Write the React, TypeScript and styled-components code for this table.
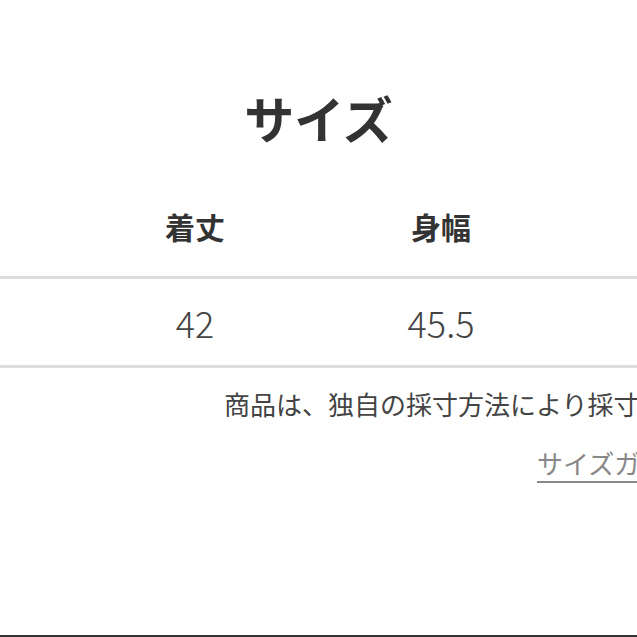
import styled, { createGlobalStyle } from 'styled-components'

const GlobalStyle = createGlobalStyle`
  html, body {
    margin: 0;
    padding: 0;
    background: #fff;
    overflow: hidden;
  }
  body {
    font-family: "Noto Sans CJK JP", "Noto Sans", sans-serif;
    color: #333;
  }
`

const columns = [
  { label: '着丈', value: '42' },
  { label: '身幅', value: '45.5' },
]

const App: React.FC = () => {
  return (
    <Page>
      <GlobalStyle />
      <Title>サイズ</Title>
      <SizeTable>
        <HeadRow>
          {columns.map((c) => (
            <HeadCell key={c.label}>{c.label}</HeadCell>
          ))}
        </HeadRow>
        <BodyRow>
          {columns.map((c) => (
            <BodyCell key={c.label}>{c.value}</BodyCell>
          ))}
        </BodyRow>
      </SizeTable>
      <Note>商品は、独自の採寸方法により採寸しております。</Note>
      <GuideLink href="#">サイズガイド</GuideLink>
    </Page>
  )
}

export default App

const Page = styled.div`
  width: 637px;
  height: 637px;
  box-sizing: border-box;
  border-bottom: 2px solid #333;
  overflow: hidden;
  display: flex;
  flex-direction: column;
`

const Title = styled.h1`
  margin: 84px 0 0;
  font-size: 50px;
  line-height: 66px;
  font-weight: 700;
  text-align: center;
  color: #333;
`

const SizeTable = styled.div`
  margin-top: 50px;
  width: 637px;
`

const HeadRow = styled.div`
  display: grid;
  grid-template-columns: repeat(2, 246px);
  padding-left: 72px;
  padding-top: 4px;
  height: 72px;
  border-bottom: 3px solid #ddd;
`

const HeadCell = styled.div`
  font-size: 30px;
  font-weight: 700;
  line-height: 44px;
  text-align: center;
  color: #333;
`

const BodyRow = styled.div`
  display: grid;
  grid-template-columns: repeat(2, 246px);
  padding-left: 72px;
  height: 86px;
  align-items: center;
  border-bottom: 3px solid #ddd;
`

const BodyCell = styled.div`
  font-size: 36px;
  font-weight: 300;
  line-height: 44px;
  text-align: center;
  color: #444;
`

const Note = styled.p`
  margin: 17px 0 0 224px;
  font-size: 26px;
  line-height: 38px;
  white-space: nowrap;
  color: #444;
`

const GuideLink = styled.a`
  margin: 21px 0 0 537px;
  font-size: 26px;
  line-height: 38px;
  white-space: nowrap;
  color: #888;
  text-decoration: underline;
  text-decoration-thickness: 2px;
  text-underline-offset: 7px;
  align-self: flex-start;
`
